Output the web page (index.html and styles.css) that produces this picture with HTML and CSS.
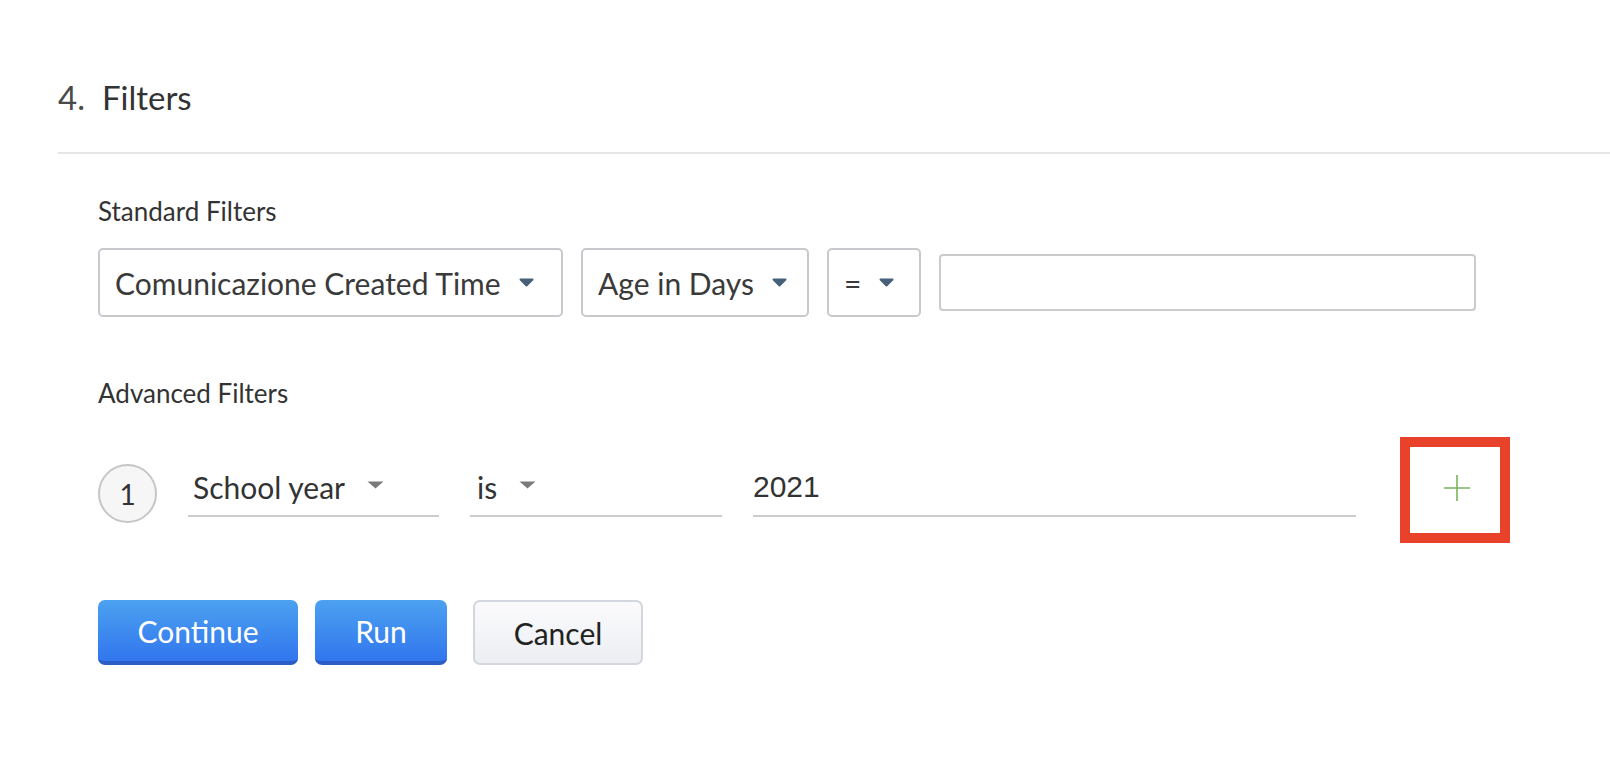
FILE: index.html
```html
<!DOCTYPE html>
<html lang="en">
<head>
<meta charset="utf-8">
<title>Filters</title>
<link rel="stylesheet" href="styles.css">
</head>
<body>
<div class="section">
  <div class="section-head">
    <h2 class="section-title"><span class="step-num">4.</span>Filters</h2>
  </div>
  <div class="section-body">
    <div class="group-label">Standard Filters</div>
    <div class="std-row">
      <div class="box-select box-field"><span class="box-text">Comunicazione Created Time</span><svg class="caret-dark" width="15" height="9" viewBox="0 0 15 9"><path d="M1.5 1.5h12l-6 6z" fill="#47607a" stroke="#47607a" stroke-width="2" stroke-linejoin="round"/></svg></div>
      <div class="box-select box-unit"><span class="box-text">Age in Days</span><svg class="caret-dark" width="15" height="9" viewBox="0 0 15 9"><path d="M1.5 1.5h12l-6 6z" fill="#47607a" stroke="#47607a" stroke-width="2" stroke-linejoin="round"/></svg></div>
      <div class="box-select box-op"><span class="box-text">=</span><svg class="caret-dark" width="15" height="9" viewBox="0 0 15 9"><path d="M1.5 1.5h12l-6 6z" fill="#47607a" stroke="#47607a" stroke-width="2" stroke-linejoin="round"/></svg></div>
      <div class="box-input"></div>
    </div>

    <div class="group-label adv-label">Advanced Filters</div>
    <div class="adv-row">
      <div class="row-num">1</div>
      <div class="line-field field-select"><span>School year</span><svg class="caret-gray" width="17" height="8" viewBox="0 0 17 8"><path d="M0.5 0.5h16l-8 7z" fill="#7a7a7a"/></svg></div>
      <div class="line-field field-op"><span>is</span><svg class="caret-gray" width="17" height="8" viewBox="0 0 17 8"><path d="M0.5 0.5h16l-8 7z" fill="#7a7a7a"/></svg></div>
      <div class="line-field field-value"><span class="value-text">2021</span></div>
      <div class="add-btn"><svg width="26" height="26" viewBox="0 0 26 26"><path d="M13 0v26M0 13h26" stroke="#7ab45b" stroke-width="1.6" fill="none"/></svg></div>
    </div>

    <div class="actions">
      <button class="btn btn-primary btn-continue">Continue</button>
      <button class="btn btn-primary btn-run">Run</button>
      <button class="btn btn-cancel">Cancel</button>
    </div>
  </div>
</div>
</body>
</html>
```
FILE: styles.css
```css
html, body {
  margin: 0;
  padding: 0;
  background: #ffffff;
}

body {
  font-family: Lato, "Open Sans", "Liberation Sans", sans-serif;
  color: #333333;
}

.section {
  padding-left: 58px;
}

.section-head {
  padding-top: 77px;
  padding-bottom: 34px;
  border-bottom: 2px solid #e6e6e6;
}

.section-title {
  margin: 0;
  font-size: 33px;
  line-height: 41px;
  font-weight: 400;
  color: #333333;
}

.step-num {
  display: inline-block;
  color: #4a4a4a;
  margin-right: 17px;
}

.section-body {
  padding-left: 40px;
}

.group-label {
  margin-top: 42px;
  font-size: 26px;
  line-height: 30px;
  color: #333333;
}

.adv-label {
  margin-top: 61px;
}

.std-row {
  display: flex;
  align-items: center;
  gap: 18px;
  margin-top: 22px;
}

.box-select {
  display: flex;
  align-items: center;
  gap: 18px;
  box-sizing: border-box;
  height: 69px;
  padding: 0 0 0 15px;
  border: 2px solid #c9c9cd;
  border-radius: 5px;
  background: #ffffff;
  flex: none;
}

.box-field {
  width: 465px;
}

.box-unit {
  width: 228px;
}

.box-op {
  width: 94px;
}

.box-text {
  font-size: 30px;
  line-height: 36px;
  color: #3a3a3a;
  white-space: nowrap;
}

.caret-dark {
  display: block;
  flex: none;
}

.box-input {
  box-sizing: border-box;
  width: 537px;
  height: 57px;
  border: 2px solid #cbcbcb;
  border-radius: 4px;
  background: #ffffff;
}

.adv-row {
  display: flex;
  align-items: flex-start;
  margin-top: 29px;
}

.row-num {
  box-sizing: border-box;
  width: 59px;
  height: 59px;
  margin-top: 27px;
  border: 2px solid #c6c6c6;
  border-radius: 50%;
  background: #f6f6f6;
  display: flex;
  align-items: center;
  justify-content: center;
  font-size: 28px;
  color: #333333;
  flex: none;
}

.line-field {
  display: flex;
  align-items: center;
  box-sizing: border-box;
  margin-top: 33px;
  height: 47px;
  padding-bottom: 11px;
  border-bottom: 2px solid #cccccc;
  font-size: 30px;
  line-height: 34px;
  color: #333333;
  flex: none;
}

.caret-gray {
  display: block;
  flex: none;
  margin-left: 22px;
  margin-top: -4px;
}

.field-select {
  width: 251px;
  margin-left: 31px;
  padding-left: 5px;
}

.field-op {
  width: 252px;
  margin-left: 31px;
  padding-left: 7px;
}

.field-value {
  width: 603px;
  margin-left: 31px;
}

.value-text {
  font-family: "Liberation Sans", Arial, sans-serif;
  font-size: 30px;
  color: #333333;
}

.add-btn {
  box-sizing: border-box;
  width: 110px;
  height: 106px;
  margin-left: 44px;
  border: 10px solid #e8432a;
  background: #ffffff;
  display: flex;
  align-items: center;
  justify-content: center;
  flex: none;
}

.add-btn svg {
  display: block;
  margin-top: -4px;
  margin-left: 4px;
}

.actions {
  display: flex;
  align-items: flex-start;
  margin-top: 57px;
}

.btn {
  box-sizing: border-box;
  height: 65px;
  border-radius: 7px;
  font-family: Lato, "Open Sans", sans-serif;
  font-size: 30px;
  padding: 0;
  cursor: pointer;
}

.btn-primary {
  color: #ffffff;
  border: none;
  border-bottom: 4px solid #2a5ec6;
  background: linear-gradient(to bottom, #4ca1f0 0%, #3176ee 100%);
}

.btn-continue {
  width: 200px;
}

.btn-run {
  width: 132px;
  margin-left: 17px;
}

.btn-cancel {
  width: 170px;
  margin-left: 26px;
  color: #222222;
  border: 2px solid #d4d6dd;
  background: linear-gradient(to bottom, #fbfbfd 0%, #eceef2 100%);
}
```
